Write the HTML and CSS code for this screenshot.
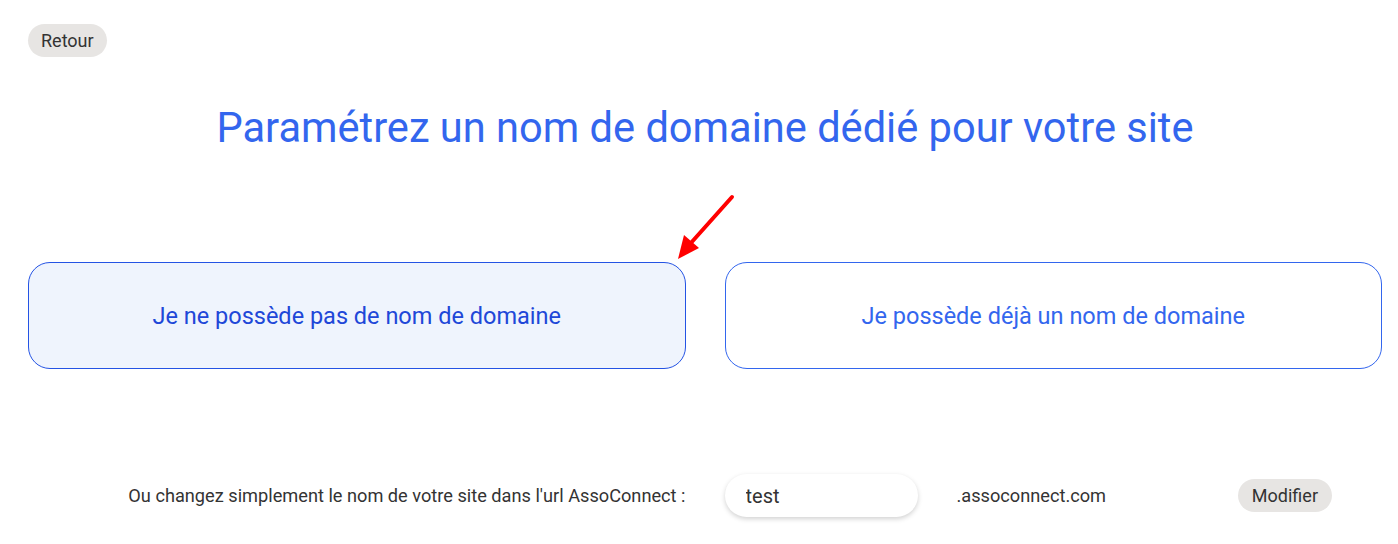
FILE: index.html
```html
<!DOCTYPE html>
<html lang="fr">
  <head>
    <meta charset="UTF-8" />
    <meta name="viewport" content="width=device-width, initial-scale=1.0" />
    <title>Nom de domaine - AssoConnect</title>
    <link rel="stylesheet" href="styles.css">
  </head>
  <body>
    <main class="page">
      <a href="#" class="pill-button back-button">Retour</a>
      <h1 class="page-title">Paramétrez un nom de domaine dédié pour votre site</h1>

      <section class="choices">
        <a href="#" class="choice choice-active">Je ne possède pas de nom de domaine</a>
        <a href="#" class="choice">Je possède déjà un nom de domaine</a>
        <svg class="hint-arrow" width="70" height="74" viewBox="0 0 70 74">
          <line x1="64" y1="7" x2="22" y2="54" stroke="#f00" stroke-width="4" stroke-linecap="round" />
          <polygon points="10,69 16,45 31,58" fill="#f00" />
        </svg>
      </section>

      <form class="subdomain-row">
        <label for="subdomain" class="subdomain-label">Ou changez simplement le nom de votre site dans l'url AssoConnect :</label>
        <div class="subdomain-fields">
          <input type="text" id="subdomain" name="subdomain" value="test" />
          <span class="subdomain-suffix">.assoconnect.com</span>
          <button type="submit" class="pill-button">Modifier</button>
        </div>
      </form>
    </main>
  </body>
</html>
```

FILE: styles.css
```css
:root {
  --brand-blue: #3366ee;
  --dark-blue: #2047d8;
  --pill-bg: #e7e5e3;
  --dark-text: #333;
}
* { box-sizing: border-box; margin: 0; padding: 0; }
html, body { height: 100%; font-family: Roboto, "Liberation Sans", sans-serif; background: #fff; color: var(--dark-text); }
.page { padding: 24px 16px 0 28px; display: flex; flex-direction: column; align-items: flex-start; }

.pill-button { display: inline-block; background: var(--pill-bg); color: var(--dark-text); border: none; border-radius: 17px; padding: 0 13px; height: 33px; line-height: 33px; font-family: inherit; font-size: 18px; text-decoration: none; cursor: pointer; }

.page-title { align-self: stretch; text-align: center; color: var(--brand-blue); font-weight: 400; font-size: 41.6px; line-height: 48px; margin-top: 47px; }

.choices { position: relative; align-self: stretch; display: grid; grid-template-columns: 1fr 1fr; gap: 39px; margin-top: 110px; }
.choice { display: flex; align-items: center; justify-content: center; height: 107px; border: 1px solid var(--brand-blue); border-radius: 22px; background: #fff; color: var(--brand-blue); font-size: 23.5px; text-decoration: none; }
.choice-active { background: #eff4fd; color: var(--dark-blue); border-color: #2453e4; }
.hint-arrow { position: absolute; left: 640px; top: -72px; }

.subdomain-row { align-self: stretch; display: grid; grid-template-columns: 1fr 1fr; gap: 39px; align-items: center; margin-top: 105px; }
.subdomain-label { text-align: right; font-size: 18.2px; color: var(--dark-text); }
.subdomain-fields { display: flex; align-items: center; }
.subdomain-fields input { width: 193px; height: 43px; border: none; border-radius: 22px; padding: 0 21px; font-family: inherit; font-size: 20px; color: var(--dark-text); background: #fff; box-shadow: 0 2px 5px rgba(0, 0, 0, 0.18); outline: none; }
.subdomain-suffix { margin-left: 39px; font-size: 18.2px; color: var(--dark-text); flex: 1; }
.subdomain-fields .pill-button { margin-right: 50px; padding: 0 14px; }
```
